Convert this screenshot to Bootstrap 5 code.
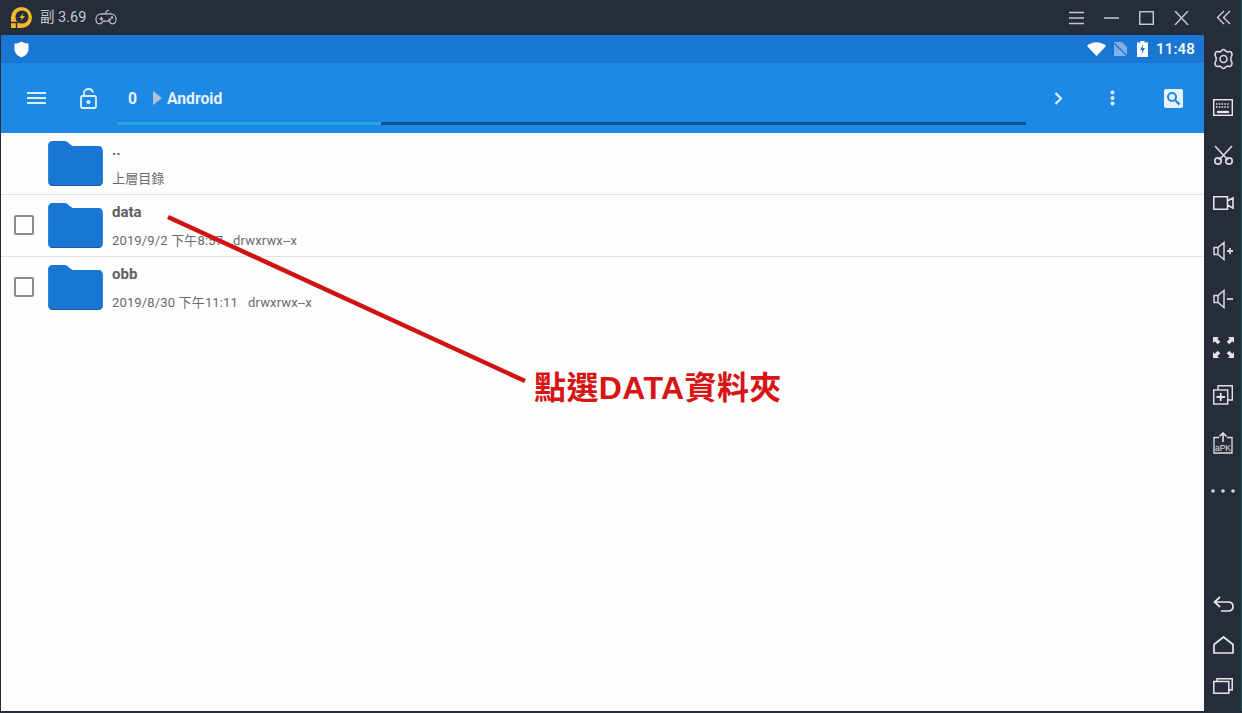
<!DOCTYPE html>
<html lang="zh-Hant">
<head>
<meta charset="utf-8">
<title>File manager</title>
<link href="https://cdn.jsdelivr.net/npm/bootstrap@5.3.0/dist/css/bootstrap.min.css" rel="stylesheet">
<script src="https://cdn.jsdelivr.net/npm/bootstrap@5.3.0/dist/js/bootstrap.bundle.min.js"></script>
<style>
html,body{height:713px;overflow:hidden;margin:0;background:#262c3a;font-family:"Roboto","Noto Sans CJK TC",sans-serif}
.shell{width:1242px;height:711px;position:relative;border-right:1px solid #0f5a55}
.mainpane{width:1204px;min-width:0;padding-left:1px}
.titlebar{height:35px;background:#262c3a;color:#c5c8ce;padding-left:10px;margin-left:-1px}
.titlebar svg{display:block}
.ver{margin-left:7px;font-size:14.500px}
.pad{margin-left:9px}
.winbtns{gap:20px;padding-right:15px}
.statusbar{height:28px;background:#1976d2;color:#fff;padding:0 9px 0 13px}
.clock{font-size:15px;font-weight:500;margin-left:8px;letter-spacing:.2px}
.battsvg{margin-left:10px}
.toolbar{height:70px;background:#1e88e5;color:#fff;position:relative;padding-left:26px}
.locksvg{margin-left:34px}
.crumb{font-size:15.700px;font-weight:700;color:#e6f2fd;padding-top:1px}
.crumb0{margin-left:31px;margin-right:16px}
.crumbarrow{width:0;height:0;border-left:9px solid #b4c3d2;border-top:7.5px solid transparent;border-bottom:7.5px solid transparent;margin-right:5px}
.tbright{margin-left:auto;padding-right:21px}
.dotsvg{margin-left:47px}
.searchsvg{margin-left:49px}
.progresstrack{position:absolute;left:116px;top:59px;width:909px;height:3px;background:#12538f}
.progressfill{height:3px;background:#29a3dc}
.filelist{background:#fdfdfd;height:578px;color:#616161}
.filerow{height:62px;border-bottom:1px solid #e2e2e2;padding-left:13px}
.filerow:last-child{border-bottom:0}
.checkcell{width:34px;flex:none;padding-top:20px}
.cb{width:20px;height:20px;border:2px solid #8c8c8c;border-radius:2px}
.foldericon{width:57px;flex:none;padding-top:8px}
.fileinfo{margin-left:7px;padding-top:8px}
.fname{font-size:15px;font-weight:700;line-height:18px;color:#5f5f5f}
.fmeta{font-size:13px;line-height:16px;margin-top:12px;color:#6a6a6a;letter-spacing:.15px}
.fmeta span+span{margin-left:10px}
.sidebar{width:37px;background:#262c3a;position:relative;padding-left:1px}
.sideslot{height:48px}
.slot41{height:41px}
.slot35{height:35px}
.bottomkeys{padding-bottom:5px}
.annotline{position:absolute;left:0;top:0;pointer-events:none}
.annottext{position:absolute;left:534px;top:368px;font:700 32px/40px "Liberation Sans","Noto Sans CJK TC",sans-serif;letter-spacing:.4px;color:#d81414;white-space:nowrap}
.botbar{height:2px;background:#262c3a}
</style>
</head>
<body>
<div class="shell d-flex">
  <div class="mainpane d-flex flex-column">
    <div class="titlebar d-flex align-items-center">
      <svg width="23" height="23" viewBox="0 0 23 23"><path d="M11.500 1A10.500 10.500 0 0 1 11.500 22H1V11.500A10.500 10.500 0 0 1 11.500 1Z" fill="#f2b92b"/><path d="M1 16.500H8M6.500 16.500V22" stroke="#262c3a" stroke-width="1.400" fill="none"/><circle cx="12" cy="11" r="6.600" fill="#262c3a"/><path d="M13.500 6.500L9.500 12H12L10.500 15.500L15 10H12.400Z" fill="#f2b92b"/></svg>
      <span class="ver">副 3.69</span>
      <svg class="pad" width="22" height="17" viewBox="0 0 24 18" fill="none" stroke="#c5c8ce" stroke-width="1.200"><path d="M7 5H17C21 5 23 8 23 11C23 14.500 21 16 19 16C17 16 16 14 15 13H9C8 14 7 16 5 16C3 16 1 14.500 1 11C1 8 3 5 7 5Z"/><path d="M12 5V3C12 1.500 14 2 15 1"/><path d="M5 10.500H9M7 8.500V12.500"/><circle cx="16" cy="11.500" r=".8"/><circle cx="18.500" cy="9" r=".8"/></svg>
      <div class="winbtns d-flex align-items-center ms-auto">
        <svg width="15" height="14" viewBox="0 0 15 14" stroke="#c5c8ce" stroke-width="1.500"><path d="M0 1.500H15M0 7H15M0 12.500H15"/></svg>
        <svg width="15" height="14" viewBox="0 0 15 14" stroke="#c5c8ce" stroke-width="1.500"><path d="M0 7H15"/></svg>
        <svg width="15" height="14" viewBox="0 0 15 14" stroke="#c5c8ce" stroke-width="1.500" fill="none"><rect x=".7" y=".7" width="13.600" height="12.600"/></svg>
        <svg width="15" height="14" viewBox="0 0 15 14" stroke="#c5c8ce" stroke-width="1.500"><path d="M1 0L14 14M14 0L1 14"/></svg>
      </div>
    </div>
    <div class="statusbar d-flex align-items-center">
      <svg width="15" height="17" viewBox="0 0 15 17"><path d="M7.500 .5C9.500 2 12 2.500 14.500 2.500V8C14.500 12 11.500 15 7.500 16.500C3.500 15 .5 12 .5 8V2.500C3 2.500 5.500 2 7.500 .5Z" fill="#fff"/></svg>
      <div class="ms-auto d-flex align-items-center">
        <svg width="19" height="14" viewBox="0 0 19 14"><path d="M0 4C5 -1 14 -1 19 4L9.500 14Z" fill="#fff"/></svg>
        <svg class="ms-2" width="13" height="14" viewBox="0 0 13 14"><path d="M0 0H8L13 5V14H0Z" fill="#7fb0e8"/><path d="M0 1L13 14" stroke="#1976d2" stroke-width="1.300"/></svg>
        <svg class="battsvg" width="11" height="16" viewBox="0 0 11 16"><path d="M3.500 0H7.500V1.500H11V16H0V1.500H3.500Z" fill="#fff"/><path d="M6.500 3L3 9H5.300L4.500 13.500L8 7H5.700Z" fill="#1976d2"/></svg>
        <span class="clock">11:48</span>
      </div>
    </div>
    <div class="toolbar d-flex align-items-center">
      <svg width="19" height="14" viewBox="0 0 19 14" stroke="#dff0fd" stroke-width="2"><path d="M0 2H19M0 7H19M0 12H19"/></svg>
      <svg class="locksvg" width="17" height="21" viewBox="0 0 17 21" fill="none" stroke="#dff0fd" stroke-width="1.800"><rect x="1" y="8" width="15" height="12" rx="1.500"/><path d="M4 8V5C4 2.500 6 1 8.500 1C11 1 12.500 2.500 13 4.500"/><circle cx="8.500" cy="14" r="1.200" fill="#dff0fd"/></svg>
      <span class="crumb crumb0">0</span>
      <span class="crumbarrow"></span>
      <span class="crumb">Android</span>
      <div class="tbright d-flex align-items-center">
        <svg width="9" height="13" viewBox="0 0 9 13" fill="none" stroke="#dff0fd" stroke-width="2.200"><path d="M1.500 1L7 6.500L1.500 12"/></svg>
        <svg class="dotsvg" width="5" height="16" viewBox="0 0 5 16" fill="#dff0fd"><circle cx="2.500" cy="2.500" r="2"/><circle cx="2.500" cy="8" r="2"/><circle cx="2.500" cy="13.500" r="2"/></svg>
        <svg class="searchsvg" width="19" height="19" viewBox="0 0 19 19"><rect width="19" height="19" rx="2" fill="#e6f2fd"/><circle cx="8" cy="8" r="4" fill="none" stroke="#1e88e5" stroke-width="2"/><path d="M11 11L15.500 15.500" stroke="#1e88e5" stroke-width="2.400"/></svg>
      </div>
      <div class="progresstrack"><div class="progressfill" style="width:29%"></div></div>
    </div>
    <div class="filelist flex-grow-1">
      <div class="filerow d-flex">
        <div class="checkcell"></div>
        <div class="foldericon"><svg width="55" height="45" viewBox="0 0 56 46"><path d="M4 0H17C19 0 20 1 22 3L25 5H52C54 5 56 7 56 10V41C56 44 54 46 52 46H4C2 46 0 44 0 41V4C0 2 2 0 4 0Z" fill="#1976d2"/><path d="M0 41C0 44 2 46 4 46H52C54 46 56 44 56 41V40C56 43 54 45 52 45H4C2 45 0 43 0 40Z" fill="#125ca8"/></svg></div>
        <div class="fileinfo"><div class="fname">..</div><div class="fmeta">上層目錄</div></div>
      </div>
      <div class="filerow d-flex">
        <div class="checkcell"><div class="cb"></div></div>
        <div class="foldericon"><svg width="55" height="45" viewBox="0 0 56 46"><path d="M4 0H17C19 0 20 1 22 3L25 5H52C54 5 56 7 56 10V41C56 44 54 46 52 46H4C2 46 0 44 0 41V4C0 2 2 0 4 0Z" fill="#1976d2"/><path d="M0 41C0 44 2 46 4 46H52C54 46 56 44 56 41V40C56 43 54 45 52 45H4C2 45 0 43 0 40Z" fill="#125ca8"/></svg></div>
        <div class="fileinfo"><div class="fname">data</div><div class="fmeta"><span>2019/9/2 下午8:57</span><span>drwxrwx--x</span></div></div>
      </div>
      <div class="filerow d-flex">
        <div class="checkcell"><div class="cb"></div></div>
        <div class="foldericon"><svg width="55" height="45" viewBox="0 0 56 46"><path d="M4 0H17C19 0 20 1 22 3L25 5H52C54 5 56 7 56 10V41C56 44 54 46 52 46H4C2 46 0 44 0 41V4C0 2 2 0 4 0Z" fill="#1976d2"/><path d="M0 41C0 44 2 46 4 46H52C54 46 56 44 56 41V40C56 43 54 45 52 45H4C2 45 0 43 0 40Z" fill="#125ca8"/></svg></div>
        <div class="fileinfo"><div class="fname">obb</div><div class="fmeta"><span>2019/8/30 下午11:11</span><span>drwxrwx--x</span></div></div>
      </div>
    </div>
  </div>
  <div class="sidebar d-flex flex-column align-items-center">
    <div class="d-flex flex-column align-items-center">
      <div class="slot35 d-flex align-items-center justify-content-center"><svg width="15" height="15" viewBox="0 0 15 15" fill="none" stroke="#d5d7dc" stroke-width="1.300"><path d="M8 1L1.500 7.500L8 14M14 1L7.500 7.500L14 14"/></svg></div>
      <div class="sideslot d-flex align-items-center justify-content-center"><svg width="21" height="22" viewBox="0 0 21 22" fill="none" stroke="#d5d7dc" stroke-width="1.600"><path d="M10.500 1.500C12 1.500 12.500 3.500 14 3.800C15.500 4.100 17 2.800 18 4C19 5.500 19.500 7 18.500 8.200C17.500 9.500 17.500 12.500 18.500 13.800C19.500 15 19 16.500 18 18C17 19.200 15.500 17.900 14 18.200C12.500 18.500 12 20.500 10.500 20.500C9 20.500 8.500 18.500 7 18.200C5.500 17.900 4 19.200 3 18C2 16.500 1.500 15 2.500 13.800C3.500 12.500 3.500 9.500 2.500 8.200C1.500 7 2 5.500 3 4C4 2.800 5.500 4.100 7 3.800C8.500 3.500 9 1.500 10.500 1.500Z"/><circle cx="10.500" cy="11" r="3.500"/></svg></div>
      <div class="sideslot d-flex align-items-center justify-content-center"><svg width="20" height="17" viewBox="0 0 20 17" fill="none" stroke="#e6e8eb" stroke-width="1.400"><rect x=".7" y=".7" width="18.600" height="15.600"/><path d="M3 5H17M3 8H17" stroke-dasharray="1.500 1.300" stroke-width="1.600"/><path d="M4 13H16" stroke-width="2.200"/></svg></div>
      <div class="sideslot d-flex align-items-center justify-content-center"><svg width="21" height="20" viewBox="0 0 21 20" fill="none" stroke="#d5d7dc" stroke-width="1.700"><path d="M2 1L15 15M19 1L6 15"/><circle cx="5" cy="16" r="3.200"/><circle cx="16" cy="16" r="3.200"/></svg></div>
      <div class="sideslot d-flex align-items-center justify-content-center"><svg width="21" height="14" viewBox="0 0 21 14" fill="none" stroke="#e0e2e6" stroke-width="1.600"><path d="M.8 .8H14.500V13.200H.8ZM14.500 5L20 1.800V12.200L14.500 9"/></svg></div>
      <div class="sideslot d-flex align-items-center justify-content-center"><svg width="20" height="20" viewBox="0 0 20 20" fill="none" stroke="#d5d7dc" stroke-width="1.500"><path d="M1 6.500H5L11 1.500V18.500L5 13.500H1ZM5 6.500V13.500"/><path d="M14 10H20M17 7V13" stroke-width="1.800"/></svg></div>
      <div class="sideslot d-flex align-items-center justify-content-center"><svg width="20" height="20" viewBox="0 0 20 20" fill="none" stroke="#d5d7dc" stroke-width="1.500"><path d="M1 6.500H5L11 1.500V18.500L5 13.500H1ZM5 6.500V13.500"/><path d="M14 10H20" stroke-width="1.800"/></svg></div>
      <div class="sideslot d-flex align-items-center justify-content-center"><svg width="23" height="23" viewBox="0 0 23 23" fill="#e0e2e6"><path d="M1 1H7L5.300 2.700L8.300 5.700L5.700 8.300L2.700 5.300L1 7ZM22 1V7L20.300 5.300L17.300 8.300L14.700 5.700L17.700 2.700L16 1ZM1 22V16L2.700 17.700L5.700 14.700L8.300 17.300L5.300 20.300L7 22ZM22 22H16L17.700 20.300L14.700 17.300L17.300 14.700L20.300 17.700L22 16Z"/></svg></div>
      <div class="sideslot d-flex align-items-center justify-content-center"><svg width="20" height="20" viewBox="0 0 20 20" fill="none" stroke="#e0e2e6" stroke-width="1.400"><rect x=".7" y="5" width="14" height="14"/><path d="M5 5V.8H19.300V15H14.700"/><path d="M3.500 12H12M7.700 8V16" stroke-width="1.800"/></svg></div>
      <div class="sideslot d-flex align-items-center justify-content-center"><svg width="20" height="22" viewBox="0 0 20 22" fill="none" stroke="#e0e2e6" stroke-width="1.300"><path d="M6 5.500H1V21H19V5.500H14"/><path d="M10 10V1M6.500 4.500L10 1L13.500 4.500" stroke-width="1.600"/><text x="10" y="18.500" font-size="8.500" fill="#e0e2e6" stroke="none" text-anchor="middle" font-family="Liberation Sans">aPK</text></svg></div>
      <div class="sideslot d-flex align-items-center justify-content-center"><svg width="24" height="4" viewBox="0 0 24 4" fill="#d5d7dc"><circle cx="2" cy="2" r="1.800"/><circle cx="12" cy="2" r="1.800"/><circle cx="22" cy="2" r="1.800"/></svg></div>
    </div>
    <div class="bottomkeys d-flex flex-column align-items-center mt-auto">
      <div class="slot41 d-flex align-items-center justify-content-center"><svg width="21" height="16" viewBox="0 0 21 16" fill="none" stroke="#e6e8eb" stroke-width="1.700"><path d="M7 1L1.500 6L7 11M1.500 6H15C18 6 20 7.500 20 10.500C20 13.500 18 15 15 15H8"/></svg></div>
      <div class="slot41 d-flex align-items-center justify-content-center"><svg width="21" height="18" viewBox="0 0 21 18" fill="none" stroke="#e6e8eb" stroke-width="1.700"><path d="M10.500 1L20 8.500V17H1V8.500Z"/></svg></div>
      <div class="slot41 d-flex align-items-center justify-content-center"><svg width="20" height="16" viewBox="0 0 20 16" fill="none" stroke="#e6e8eb" stroke-width="1.500"><rect x=".8" y="3.500" width="15" height="11.700"/><path d="M4 3.500V.8H19.200V12H15.800"/></svg></div>
    </div>
  </div>
  <svg class="annotline" width="1242" height="713"><path d="M168 217L525 381" stroke="#cf1313" stroke-width="4.500"/></svg>
  <div class="annottext">點選DATA資料夾</div>
</div>
<div class="botbar"></div>
</body>
</html>
